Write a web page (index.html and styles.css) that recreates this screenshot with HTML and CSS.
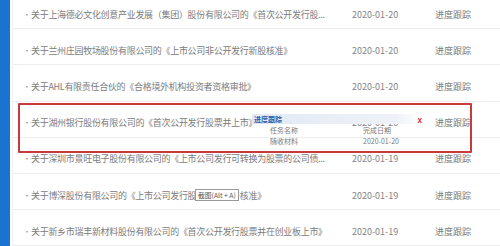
FILE: index.html
```html
<!DOCTYPE html>
<html lang="zh-CN">
<head>
    <meta charset="UTF-8">
    <title>审核进度</title>
    <link rel="stylesheet" href="styles.css">
</head>
<body>
<div class="page">
    <div class="side-bar"></div>
    <div class="content">
        <ul class="list">
            <li class="row">
                <span class="dot">•</span>
                <span class="title">关于上海德必文化创意产业发展（集团）股份有限公司的《首次公开发行股...</span>
                <span class="date">2020-01-20</span>
                <span class="action">进度跟踪</span>
            </li>
            <li class="row">
                <span class="dot">•</span>
                <span class="title">关于兰州庄园牧场股份有限公司的《上市公司非公开发行新股核准》</span>
                <span class="date">2020-01-20</span>
                <span class="action">进度跟踪</span>
            </li>
            <li class="row">
                <span class="dot">•</span>
                <span class="title">关于AHL有限责任合伙的《合格境外机构投资者资格审批》</span>
                <span class="date">2020-01-20</span>
                <span class="action">进度跟踪</span>
            </li>
            <li class="row">
                <span class="dot">•</span>
                <span class="title">关于湖州银行股份有限公司的《首次公开发行股票并上市》</span>
                <span class="date">2020-01-20</span>
                <span class="action">进度跟踪</span>
            </li>
            <li class="row">
                <span class="dot">•</span>
                <span class="title">关于深圳市景旺电子股份有限公司的《上市公司发行可转换为股票的公司债...</span>
                <span class="date">2020-01-19</span>
                <span class="action">进度跟踪</span>
            </li>
            <li class="row">
                <span class="dot">•</span>
                <span class="title">关于博深股份有限公司的《上市公司发行股份购买资产核准》</span>
                <span class="date">2020-01-19</span>
                <span class="action">进度跟踪</span>
            </li>
            <li class="row">
                <span class="dot">•</span>
                <span class="title">关于新乡市瑞丰新材料股份有限公司的《首次公开发行股票并在创业板上市》</span>
                <span class="date">2020-01-19</span>
                <span class="action">进度跟踪</span>
            </li>
        </ul>

        <!-- highlight drawn over the 4th row -->
        <div class="highlight"></div>

        <div class="popup">
            <div class="popup-head">
                <span>进度跟踪</span>
                <span class="popup-close">x</span>
            </div>
            <div class="popup-row">
                <span>任务名称</span>
                <span>完成日期</span>
            </div>
            <div class="popup-row">
                <span>随收材料</span>
                <span>2020-01-20</span>
            </div>
        </div>

        <div class="shot-tip">截图(Alt + A)</div>
    </div>
</div>
</body>
</html>
```

FILE: styles.css
```css
body, html {
    margin: 0;
    height: 100%;
    font-family: "Noto Sans CJK SC", "Noto Sans", sans-serif;
    background: #fff;
    overflow: hidden;
}
.page {
    display: flex;
    height: 246px;
}
.side-bar {
    width: 10px;
    background: #1a74cf;
}
.content {
    position: relative;
    flex: 1;
    margin-left: 3px;
    background: #fff;
    box-shadow: -1px 0 0 #eef1f4;
}
.list {
    list-style: none;
    margin: -7px 0 0 0;
    padding: 0;
}
.row {
    display: flex;
    align-items: center;
    height: 36.2px;
    box-sizing: border-box;
    padding-top: 7px;
    border-bottom: 1px solid #ededed;
    color: #7c7c7c;
}
.dot {
    width: 8px;
    margin-left: 10px;
    font-size: 8px;
    color: #999;
}
.title {
    width: 304px;
    font-size: 9px;
    letter-spacing: -0.3px;
    white-space: nowrap;
    overflow: hidden;
}
.date {
    margin-left: 17px;
    width: 83px;
    font-size: 9px;
    color: #858585;
}
.action {
    font-size: 9px;
    color: #7c7c7c;
}
.highlight {
    position: absolute;
    left: 5px;
    top: 103px;
    width: 450px;
    height: 46px;
    border: 2px solid #c8383c;
    border-radius: 1px;
}
.popup {
    position: absolute;
    left: 239px;
    top: 114px;
    width: 170px;
    font-size: 7px;
    color: #7a7a7a;
}
.popup-head {
    display: flex;
    justify-content: space-between;
    align-items: center;
    height: 10px;
    padding-left: 2px;
    background: linear-gradient(to right, #e2e9f4, #eef2f8 85%, #fff);
    color: #2f5da6;
    font-weight: bold;
}
.popup-close {
    color: #d8323a;
    font-size: 8px;
    font-weight: bold;
    margin-right: 0;
}
.popup-row {
    display: flex;
    height: 11px;
    align-items: center;
    padding-left: 18px;
}
.popup-row span:first-child {
    width: 93px;
}
.shot-tip {
    position: absolute;
    left: 182px;
    top: 189px;
    padding: 0 2px;
    height: 10px;
    line-height: 10px;
    border: 1px solid #9a9a9a;
    background: #fff;
    font-size: 6.8px;
    color: #555;
}
```
